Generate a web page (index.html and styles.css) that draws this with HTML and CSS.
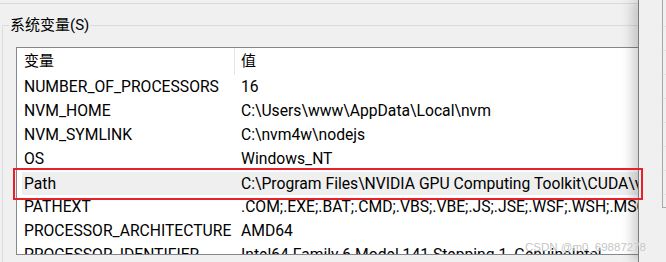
FILE: index.html
```html
<!DOCTYPE html>
<html lang="zh-CN">
<head>
    <meta charset="UTF-8" />
    <title>系统变量</title>
    <link rel="stylesheet" href="styles.css">
</head>
<body>
    <div class="main">
        <div class="rule"></div>
        <div class="group">
            <div class="group-title">系统变量(S)</div>
            <div class="list">
                <div class="list-head">
                    <div class="head-cell first">变量</div>
                    <div class="head-cell">值</div>
                </div>
                <div class="row"><span class="name">NUMBER_OF_PROCESSORS</span><span class="value">16</span></div>
                <div class="row"><span class="name">NVM_HOME</span><span class="value">C:\Users\www\AppData\Local\nvm</span></div>
                <div class="row"><span class="name">NVM_SYMLINK</span><span class="value">C:\nvm4w\nodejs</span></div>
                <div class="row"><span class="name">OS</span><span class="value">Windows_NT</span></div>
                <div class="row selected"><span class="name">Path</span><span class="value">C:\Program Files\NVIDIA GPU Computing Toolkit\CUDA\v12.4\bin</span></div>
                <div class="row"><span class="name">PATHEXT</span><span class="value">.COM;.EXE;.BAT;.CMD;.VBS;.VBE;.JS;.JSE;.WSF;.WSH;.MSC</span></div>
                <div class="row"><span class="name">PROCESSOR_ARCHITECTURE</span><span class="value">AMD64</span></div>
                <div class="row"><span class="name">PROCESSOR_IDENTIFIER</span><span class="value">Intel64 Family 6 Model 141 Stepping 1, GenuineIntel</span></div>
            </div>
        </div>
    </div>
    <div class="side">
        <div class="side-panel">
            <div class="tick"></div>
            <div class="tick"></div>
            <div class="tick"></div>
            <div class="tick"></div>
            <div class="tick"></div>
            <div class="tick"></div>
            <div class="tick"></div>
            <div class="tick"></div>
        </div>
    </div>

    <!-- annotation + watermark on top -->
    <div class="mark"></div>
    <div class="watermark">CSDN @m0_69887278</div>
</body>
</html>
```

FILE: styles.css
```css
/* Page */
body {
    margin: 0;
    width: 666px;
    height: 262px;
    overflow: hidden;
    background: #f0f0f0;
    font-family: Roboto, "Noto Sans CJK SC", sans-serif;
    font-size: 15.7px;
    color: #000;
    display: flex;
    position: relative;
}

.main {
    width: 638px;
    flex: none;
    overflow: hidden;
}

.rule {
    margin-top: 3px;
    height: 1px;
    background: #dadada;
}

/* Group box */
.group {
    margin: 21px 0 0 2px;
    border-top: 1px solid #dcdcdc;
    border-left: 1px solid #dcdcdc;
    padding-left: 13px;
    height: 300px;
}

.group-title {
    width: fit-content;
    margin: -11px 0 0 -7px;
    padding: 0 1px;
    height: 20px;
    line-height: 20px;
    font-size: 15px;
    background: #f0f0f0;
}

/* List view */
.list {
    margin-top: 12px;
    width: 680px;
    height: 206px;
    border: 1px solid #828790;
    background: #fff;
    overflow: hidden;
}

.list-head {
    display: flex;
    height: 27px;
    font-size: 15px;
}

.head-cell {
    line-height: 27px;
    padding-left: 6px;
}

.head-cell.first {
    width: 210px;
    padding-left: 7px;
    border-right: 1px solid #e5e5e5;
}

.row {
    display: flex;
    height: 24px;
    line-height: 24px;
    margin-left: 5px;
    white-space: nowrap;
}

.row.selected {
    background: #efefef;
    border-top: 1px solid #fff;
    height: 23px;
    line-height: 23px;
}

.name {
    width: 210px;
    flex: none;
    padding-left: 2px;
}

.value {
    padding-left: 7px;
}

/* Window on the right */
.side {
    flex: 1;
    position: relative;
    z-index: 1;
    border-left: 1px solid #7c7c7c;
    box-shadow: -6px 0 12px rgba(0, 0, 0, 0.18);
    background: #f0f0f0;
}

.side-panel {
    margin-left: 23px;
    height: 208px;
    border-left: 1px solid #a8a8a8;
    border-bottom: 1px solid #a8a8a8;
    padding-top: 26px;
    box-sizing: border-box;
}

.tick {
    height: 1px;
    background: #e2e2e2;
    margin-bottom: 23px;
}

/* Red highlight box */
.mark {
    position: absolute;
    left: 13px;
    top: 168px;
    width: 630px;
    height: 32px;
    box-sizing: border-box;
    border: 2px solid #e8202a;
    z-index: 2;
}

.watermark {
    position: absolute;
    left: 525px;
    top: 241px;
    line-height: 13px;
    font-family: "Liberation Sans", Arial, sans-serif;
    font-size: 11.5px;
    color: rgba(185, 185, 185, 0.85);
    text-shadow: 0 0 1px #fff;
    z-index: 3;
}
```
